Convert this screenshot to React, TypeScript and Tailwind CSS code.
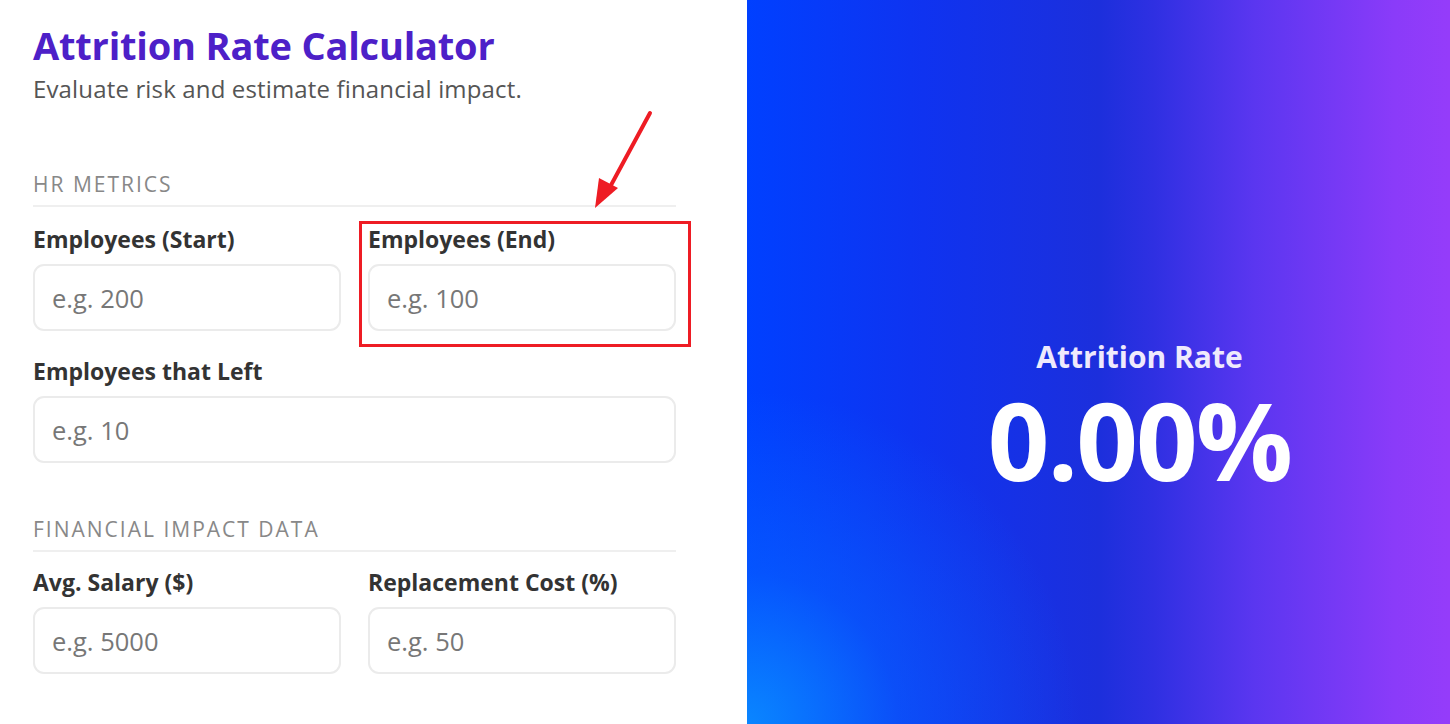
import { useState } from "react";

type Field = {
  id: string;
  label: string;
  placeholder: string;
};

const font = { fontFamily: '"Open Sans", "Noto Sans", sans-serif' };

function Input({ field }: { field: Field }) {
  const [value, setValue] = useState<string>("");
  return (
    <div className="flex flex-col">
      <label
        htmlFor={field.id}
        className="text-[23px] font-bold text-[#333] leading-none"
      >
        {field.label}
      </label>
      <input
        id={field.id}
        type="number"
        value={value}
        onChange={(e) => setValue(e.target.value)}
        placeholder={field.placeholder}
        className="mt-[13px] h-[67px] w-full rounded-[11px] border-2 border-[#ebebeb] bg-white px-[17px] text-[25.5px] text-[#333] placeholder:text-[#777] outline-none"
      />
    </div>
  );
}

function SectionTitle({ children }: { children: string }) {
  return (
    <div className="border-b-2 border-[#efefef] pb-[10px]">
      <h2 className="text-[21px] uppercase tracking-[2px] text-[#888] leading-none">
        {children}
      </h2>
    </div>
  );
}

export default function App() {
  return (
    <div className="flex h-[724px] w-[1450px] overflow-hidden bg-white" style={font}>
      <div className="relative w-[747px] shrink-0 pl-[33px] pr-[71px] pt-[26px]">
        <h1 className="text-[38px] font-bold leading-none text-[#4d20c8] tracking-[-0.2px]">
          Attrition Rate Calculator
        </h1>
        <p className="mt-[13px] text-[24px] leading-none text-[#555] tracking-[0.15px]">
          Evaluate risk and estimate financial impact.
        </p>

        <div className="mt-[73px]">
          <SectionTitle>HR Metrics</SectionTitle>
          <div className="mt-[21px] grid grid-cols-2 gap-x-[27px]">
            <Input field={{ id: "start", label: "Employees (Start)", placeholder: "e.g. 200" }} />
            <Input field={{ id: "end", label: "Employees (End)", placeholder: "e.g. 100" }} />
          </div>
          <div className="mt-[29px]">
            <Input field={{ id: "left", label: "Employees that Left", placeholder: "e.g. 10" }} />
          </div>
        </div>

        <div className="mt-[56px]">
          <SectionTitle>Financial Impact Data</SectionTitle>
          <div className="mt-[19px] grid grid-cols-2 gap-x-[27px]">
            <Input field={{ id: "salary", label: "Avg. Salary ($)", placeholder: "e.g. 5000" }} />
            <Input field={{ id: "cost", label: "Replacement Cost (%)", placeholder: "e.g. 50" }} />
          </div>
        </div>

        {/* annotation */}
        <div className="pointer-events-none absolute left-[359px] top-[221px] h-[126px] w-[332px] border-[3px] border-[#ee1c24]" />
        <svg
          className="pointer-events-none absolute left-[585px] top-[105px]"
          width="75"
          height="110"
          viewBox="0 0 75 110"
        >
          <line x1="65" y1="8" x2="25" y2="82" stroke="#ee1c24" strokeWidth="4" strokeLinecap="round" />
          <polygon points="10,103 14,73 33,83" fill="#ee1c24" />
        </svg>
      </div>

      <div className="flex flex-1 flex-col items-center justify-center bg-[radial-gradient(circle_at_0%_100%,#0a86ff_0%,rgba(10,110,255,0.45)_15%,transparent_33%),linear-gradient(to_right,#0040ff_0%,#0f33f0_25%,#1c2fdc_50%,#2f30e2_58%,#5a36f0_72%,#8a3bf9_92%,#953cfa_100%)] pl-[82px] pt-[118px]">
        <div className="text-[30px] font-bold leading-none text-[#efeafc]">Attrition Rate</div>
        <div className="mt-[9px] text-[108px] font-bold leading-[1.1] text-white tracking-[-2px]">
          0.00%
        </div>
      </div>
    </div>
  );
}
